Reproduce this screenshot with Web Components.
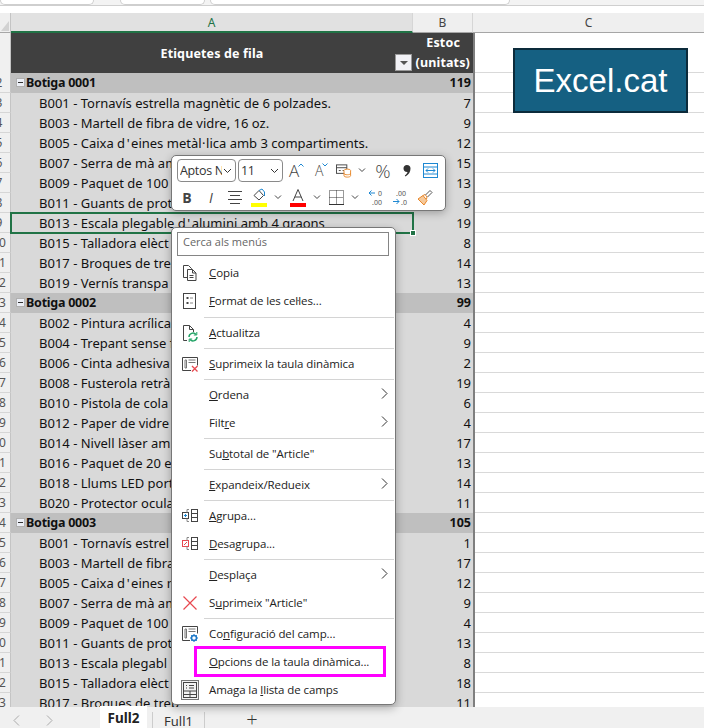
<!DOCTYPE html>
<html lang="ca">
<head>
<meta charset="utf-8">
<title>Excel.cat</title>
<style>
html, body { margin: 0; height: 100%; overflow: hidden; background: #fff; }
</style>
</head>
<body>
<xl-app></xl-app>
<script>
const CELL_FONT = `"Noto Sans", sans-serif`;
const MENU_FONT = `"Open Sans", sans-serif`;

const ROWS = [
	["g", "Botiga 0001", 119],
	["i", "B001 - Tornavís estrella magnètic de 6 polzades.", 7],
	["i", "B003 - Martell de fibra de vidre, 16 oz.", 9],
	["i", "B005 - Caixa d'eines metàl·lica amb 3 compartiments.", 12],
	["i", "B007 - Serra de mà am", 15],
	["i", "B009 - Paquet de 100 c", 13],
	["i", "B011 - Guants de prot", 9],
	["i", "B013 - Escala plegable d'alumini amb 4 graons", 19],
	["i", "B015 - Talladora elèct", 8],
	["i", "B017 - Broques de trep", 14],
	["i", "B019 - Vernís transpa", 13],
	["g", "Botiga 0002", 99],
	["i", "B002 - Pintura acrílica", 4],
	["i", "B004 - Trepant sense f", 9],
	["i", "B006 - Cinta adhesiva", 2],
	["i", "B008 - Fusterola retrà", 19],
	["i", "B010 - Pistola de cola", 6],
	["i", "B012 - Paper de vidre", 4],
	["i", "B014 - Nivell làser am", 17],
	["i", "B016 - Paquet de 20 e", 13],
	["i", "B018 - Llums LED port", 14],
	["i", "B020 - Protector ocula", 11],
	["g", "Botiga 0003", 105],
	["i", "B001 - Tornavís estrel", 1],
	["i", "B003 - Martell de fibra", 17],
	["i", "B005 - Caixa d'eines m", 12],
	["i", "B007 - Serra de mà am", 9],
	["i", "B009 - Paquet de 100 c", 4],
	["i", "B011 - Guants de prot", 13],
	["i", "B013 - Escala plegabl", 8],
	["i", "B015 - Talladora elèct", 18],
	["i", "B017 - Broques de trep", 11],
];

const ICONS = {
	copy: `<svg width="18" height="18" viewBox="0 0 18 18" fill="none" stroke="#444"><path d="M6.500 13.500h-4v-12h5l3 3v1"/><path d="M6.500 5.500h5l3.500 3.500v7.500h-8.500z" fill="#fff"/><path d="M11.500 5.500v3.500h3.500M8.500 11.500h4M8.500 13.500h4"/></svg>`,
	format: `<svg width="18" height="18" viewBox="0 0 18 18" fill="none" stroke="#444"><rect x="2.500" y="1.500" width="12" height="15"/><rect x="5.500" y="5" width="2" height="2" fill="#444" stroke="none"/><rect x="5.500" y="10" width="2" height="2" fill="#444" stroke="none"/><path d="M9 6h3M9 11h3" stroke="#888"/></svg>`,
	refresh: `<svg width="18" height="18" viewBox="0 0 18 18" fill="none"><path d="M6 16.500h-3.500v-15h6l4 4v2.500M8.500 1.500v4h4" stroke="#444"/><path d="M8 13a4 4 0 0 1 7-2.500M16 13a4 4 0 0 1-7 2.500" stroke="#21a366" stroke-width="1.500"/><path d="M15.800 8v3h-3M8.200 18v-3h3" stroke="#21a366"/></svg>`,
	pivotx: `<svg width="18" height="18" viewBox="0 0 18 18" fill="none"><path d="M10 15.500h-8.500v-13h15v8" stroke="#444"/><path d="M4 5h1.500v8h-1.500zM7.500 5h7M7.500 7.500h7" stroke="#777"/><path d="M11 11l5.500 5.500M16.500 11l-5.500 5.500" stroke="#e8484f" stroke-width="1.300"/></svg>`,
	group: `<svg width="18" height="18" viewBox="0 0 18 18" fill="none" stroke="#444"><rect x="1.500" y="5.500" width="6" height="6"/><path d="M4.500 7v3M3 8.500h3" stroke="#1e88d2"/><path d="M8 2.500h-2v3M8 14.500h-2v-3" stroke="#888"/><rect x="10.500" y="2.500" width="6" height="12"/><path d="M10.500 6.500h6M10.500 10.500h6"/></svg>`,
	ungroup: `<svg width="18" height="18" viewBox="0 0 18 18" fill="none" stroke="#444"><rect x="1.500" y="5.500" width="6" height="6" stroke="#e8484f"/><path d="M3 10l3-3" stroke="#e8484f"/><path d="M8 2.500h-2v3M8 14.500h-2v-3" stroke="#888"/><rect x="10.500" y="2.500" width="6" height="12"/><path d="M10.500 6.500h6M10.500 10.500h6"/></svg>`,
	cross: `<svg width="18" height="18" viewBox="0 0 18 18" fill="none" stroke="#e8484f" stroke-width="1.200"><path d="M2.500 2.500l13 13M15.500 2.500l-13 13"/></svg>`,
	pivotgear: `<svg width="18" height="18" viewBox="0 0 18 18" fill="none"><path d="M9 15.500h-7.500v-14h15v7" stroke="#444"/><path d="M4 4h1.500v9h-1.500zM7.500 4h7M7.500 6.500h7" stroke="#777"/><circle cx="13" cy="13" r="2.500" stroke="#1e78c8" stroke-width="1.500"/><path d="M13 9v1.500M13 15.500v1.500M9 13h1.500M15.500 13h1.500M10.200 10.200l1 1M14.800 14.800l1 1M15.800 10.200l-1 1M11.200 14.800l-1 1" stroke="#1e78c8"/></svg>`,
	fieldlist: `<svg width="14" height="16" viewBox="0 0 14 16" fill="none" stroke="#444"><rect x="0.500" y="0.500" width="13" height="15"/><path d="M3 3.500h1M6 3.500h5M3 6h1M6 6h5M.5 9h13M.5 12.500h13M7 9v6.500"/></svg>`,
};

function define(name, html, render) {
	customElements.define(name, class extends HTMLElement {
		constructor() {
			super();
			this.attachShadow({mode: "open"}).innerHTML = html;
		}
		connectedCallback() {
			render && render(this, this.shadowRoot);
		}
	});
}

define("xl-topbar", `
<style>
:host { display: flex; height: 13px; flex: none; background: #fff; box-sizing: border-box; position: relative; }
.strip { display: flex; gap: 5px; height: 5px; width: 100%; background: #f3f3f3; border-bottom: 1px solid #cfcfcf; box-sizing: content-box; }
i { display: block; height: 5px; background: #fff; border: 1px solid #cfcfcf; border-top: 0; border-radius: 0 0 5px 5px; box-sizing: border-box; }
</style>
<div class="strip">
	<i style="width:94px"></i>
	<i style="width:85px;margin-left:21px"></i>
	<i style="width:300px"></i>
</div>`);

define("xl-columns", `
<style>
:host { display: grid; grid-template-columns: 11px 402px 60px 1fr; height: 20px; flex: none; font: 12px ${CELL_FONT}; color: #444; background: #efefef; }
div { display: flex; align-items: center; justify-content: center; box-sizing: border-box; border-bottom: 1px solid #a6a6a6; border-right: 1px solid #d6d6d6; }
.corner { border-right: 1px solid #c4c4c4; position: relative; }
.corner::after { content: ""; position: absolute; right: 1px; bottom: 1px; border-style: solid; border-color: transparent #d2d2d2 #d2d2d2 transparent; border-width: 5px 4px; }
.a { background: #e1e1e1; color: #217346; border-bottom: 2px solid #217346; }
.c { border-right: 0; }
</style>
<div class="corner"></div><div class="a">A</div><div>B</div><div class="c">C</div>`);

define("xl-head", `
<style>
:host { display: grid; grid-template-columns: 11px 402px 60px 2px 1fr; height: 40px; font: 700 12.500px ${CELL_FONT}; color: #fff; letter-spacing: .15px; }
.n { background: #f0f0f0; border-right: 1px solid #c4c4c4; box-sizing: border-box; }
.a { background: #404040; display: flex; align-items: center; justify-content: center; }
.b { background: #404040; text-align: right; padding-right: 3px; line-height: 20px; box-sizing: border-box; position: relative; white-space: nowrap; }
.e { padding-right: 10px; }
.f { position: absolute; left: -18px; top: 21px; width: 17px; height: 17px; background: #f1f1f6; border: 1px solid #999; box-sizing: border-box; display: flex; align-items: center; justify-content: center; }
.f::after { content: ""; border: 4px solid transparent; border-top: 4px solid #555; border-bottom: 0; }
.g { background: #7f7f7f; }
.c { border-bottom: 1px solid #d9d9d9; }
</style>
<div class="n"></div>
<div class="a">Etiquetes de fila</div>
<div class="b"><div class="e">Estoc</div><div>(unitats)</div><span class="f"></span></div>
<div class="g"></div>
<div class="c"></div>`);

define("xl-row", `
<style>
:host { display: grid; grid-template-columns: 11px 402px 60px 2px 1fr; height: 20px; font: 13px/20px ${CELL_FONT}; color: #111; white-space: nowrap; }
.n { background: #f0f0f0; border-right: 1px solid #c4c4c4; border-bottom: 1px solid #d6d6d6; box-sizing: border-box; overflow: hidden; color: #555; font-size: 12px; }
.n span { display: block; width: 16px; margin-left: -9px; text-align: center; }
.a, .b { background: #d9d9d9; }
.a { padding-left: 28px; overflow: hidden; box-sizing: border-box; }
.b { text-align: right; padding-right: 2px; box-sizing: border-box; }
.g { background: #7f7f7f; }
.c { border-bottom: 1px solid #d9d9d9; box-sizing: border-box; }
.w { padding: 0 1.500px; }
.d { padding: 0 .5px; }
.m { display: none; width: 9px; height: 9px; box-sizing: border-box; margin: 0 1px 0 -23px; background: #eceff6; border: 1px solid #b0b0b0; position: relative; }
.m::after { content: ""; position: absolute; left: 1px; right: 1px; top: 3px; height: 1px; background: #333; }
:host([group]) .a, :host([group]) .b { background: #bfbfbf; font-weight: 700; font-size: 12.500px; }
:host([group]) .m { display: inline-block; }
:host([group]) .a { letter-spacing: -.25px; }
</style>
<div class="n"><span></span></div>
<div class="a"><i class="m"></i><span class="t"></span></div>
<div class="b"></div>
<div class="g"></div>
<div class="c"></div>`, (el, root) => {
	root.querySelector(".n span").textContent = el.getAttribute("num");
	root.querySelector(".t").innerHTML = el.getAttribute("label")
		.replace(/'/g, `<span class="w">'</span>`)
		.replace(/·/g, `<span class="d">·</span>`);
	root.querySelector(".b").textContent = el.getAttribute("value");
});

define("xl-logo", `
<style>
:host { position: absolute; left: 513px; top: 48px; width: 175px; height: 65px; box-sizing: border-box; background: #156082; border: 2px solid #0c2b3b; color: #fff; font: 33px "Liberation Sans", sans-serif; display: flex; align-items: center; justify-content: center; }
</style>
<slot></slot>`);

define("xl-selection", `
<style>
:host { position: absolute; left: 10px; top: 212px; width: 404px; height: 22px; box-sizing: border-box; border: 2px solid #217346; }
i { position: absolute; right: -4px; bottom: -4px; width: 6px; height: 6px; background: #217346; border: 1px solid #fff; box-sizing: border-box; }
</style>
<i></i>`);

define("xl-combo", `
<style>
:host { display: flex; align-items: center; box-sizing: border-box; height: 23px; border: 1px solid #8a8a8a; border-radius: 4px; font: 12.500px ${MENU_FONT}; letter-spacing: -.35px; color: #333; padding: 0 3px 0 2px; overflow: hidden; }
span { flex: 1; overflow: hidden; white-space: nowrap; }
svg { flex: none; margin-left: 1px; }
</style>
<span><slot></slot></span>
<svg width="9" height="6" viewBox="0 0 9 6" fill="none" stroke="#333"><path d="M1 1l3.500 3.500L8 1"/></svg>`);

define("xl-tool", `
<style>
:host { display: flex; align-items: center; justify-content: center; flex: none; height: 23px; color: #444; font: 15px ${MENU_FONT}; }
</style>
<slot></slot>`);

function caret(left) {
	return `<xl-tool style="width:9px;margin-left:${left}px"><svg width="8" height="5" viewBox="0 0 8 5" fill="none" stroke="#444"><path d="M1 .5l3 3 3-3"/></svg></xl-tool>`;
}

define("xl-toolbar", `
<style>
:host { position: absolute; left: 171px; top: 155px; width: 275px; height: 56px; box-sizing: border-box; background: #fff; border: 1px solid #777; border-radius: 5px; box-shadow: 0 2px 8px rgba(0,0,0,.28); padding: 3px 5px; display: flex; flex-direction: column; gap: 4px; }
.row { display: flex; align-items: center; height: 23px; }
</style>
<div class="row">
	<xl-combo style="width:59px">Aptos Na</xl-combo>
	<xl-combo style="width:45px;margin-left:2px">11</xl-combo>
	<xl-tool style="width:15px;margin-left:6px;justify-content:flex-start;font-size:17px;font-weight:300;position:relative">A<svg style="position:absolute;right:0;top:4px" width="6" height="4" viewBox="0 0 6 4" fill="none" stroke="#1e88d2"><path d="M.5 3.500L3 1l2.500 2.500"/></svg></xl-tool>
	<xl-tool style="width:13px;margin-left:11px;justify-content:flex-start;font-size:14px;font-weight:300;position:relative">A<svg style="position:absolute;right:0;top:4px" width="6" height="4" viewBox="0 0 6 4" fill="none" stroke="#1e88d2"><path d="M.5.500L3 3 5.500.500"/></svg></xl-tool>
	<xl-tool style="width:16px;margin-left:8px"><svg width="17" height="14" viewBox="0 0 17 14" fill="none"><rect x=".5" y=".5" width="11" height="9" stroke="#444"/><path d="M.5 3.500h11M3 6.500h2M7 6.500h2" stroke="#444"/><ellipse cx="12" cy="6.500" rx="3.500" ry="1.500" fill="#fff" stroke="#e8872b"/><path d="M8.500 6.500v5.500c0 2 7 2 7 0v-5.500M8.500 9.500c0 2 7 2 7 0" fill="#fff" stroke="#e8872b"/></svg></xl-tool>
	${caret(5)}
	<xl-tool style="width:14px;margin-left:10px;font-size:19px;font-weight:300">%</xl-tool>
	<xl-tool style="width:8px;margin-left:13px"><svg width="8" height="14" viewBox="0 0 8 14"><path d="M3.800 1c2.500 0 3.700 1.500 3.700 3.500 0 3-1.500 6-5 8l-.7-.9c1.500-1.200 2.500-2.500 2.700-3.700C1.800 8 .5 6.500.5 4.500.5 2.500 2 1 3.800 1z" fill="#333"/></svg></xl-tool>
	<xl-tool style="width:15px;margin-left:12px"><svg width="15" height="15" viewBox="0 0 15 15" fill="none" stroke="#1e88d2"><rect x=".5" y=".5" width="14" height="14"/><path d="M.5 4h14M.5 11h14M3 7.500h9M3 7.500l2-2M3 7.500l2 2M12 7.500l-2-2M12 7.500l-2 2"/></svg></xl-tool>
</div>
<div class="row">
	<xl-tool style="width:12px;margin-left:4px;font-weight:700;font-size:14px">B</xl-tool>
	<xl-tool style="width:12px;margin-left:12px;font-style:italic;font-size:14px">I</xl-tool>
	<xl-tool style="width:14px;margin-left:11px"><svg width="14" height="13" viewBox="0 0 14 13" stroke="#444"><path d="M0 .5h14M2 4.500h10M0 8.500h14M2 12.500h10"/></svg></xl-tool>
	<xl-tool style="width:16px;margin-left:9px"><svg width="16" height="19" viewBox="0 0 16 19" fill="none"><path d="M3 7.500L8 2.500l4.500 5-4.500 4.500z" stroke="#444"/><path d="M8 2.500l3-1.500 2.500 3v4" stroke="#1e88d2"/><rect y="15" width="16" height="4" fill="#ffff00"/></svg></xl-tool>
	${caret(6)}
	<xl-tool style="width:16px;margin-left:8px"><svg width="16" height="19" viewBox="0 0 16 19" fill="none"><path d="M3 13L8 1.500 13 13M4.800 9h6.400" stroke="#444"/><rect y="15" width="16" height="4" fill="#f00"/></svg></xl-tool>
	${caret(6)}
	<xl-tool style="width:15px;margin-left:8px"><svg width="15" height="15" viewBox="0 0 15 15" fill="none" stroke="#333" stroke-dasharray="1 1"><path d="M.5.500h14v14h-14zM7.500.500v14M.5 7.500h14"/><path d="M0 14.500h15" stroke-dasharray="none"/></svg></xl-tool>
	${caret(6)}
	<xl-tool style="width:16px;margin-left:9px"><svg width="16" height="17" viewBox="0 0 16 17" fill="none" stroke="#1e88d2"><path d="M1 4h6M1 4l2.500-2.500M1 4l2.500 2.500"/><text x="10" y="7" fill="#555" stroke="none" font-size="7" font-family="Noto Sans">0</text><text x="4" y="16" fill="#555" stroke="none" font-size="7" font-family="Noto Sans">.00</text></svg></xl-tool>
	<xl-tool style="width:15px;margin-left:9px"><svg width="15" height="17" viewBox="0 0 15 17" fill="none" stroke="#1e88d2"><path d="M0 12.500h6M6 12.500l-2.500-2.500M6 12.500l-2.500 2.500"/><text x="3" y="7" fill="#555" stroke="none" font-size="7" font-family="Noto Sans">.00</text><text x="8" y="16" fill="#555" stroke="none" font-size="7" font-family="Noto Sans">.0</text></svg></xl-tool>
	<xl-tool style="width:16px;margin-left:9px"><svg width="16" height="16" viewBox="0 0 16 16" fill="none" stroke="#e8872b"><path d="M1 9l5-3.500 4 5L7 15z" fill="#f6c99a"/><path d="M6 5.500l2-1 2 2.500-.5 2"/><path d="M8.500 5L13 .5l2 2-4.500 4.500" stroke="#555"/></svg></xl-tool>
</div>`);

define("xl-menu-item", `
<style>
:host { display: flex; align-items: center; height: 28px; box-sizing: border-box; padding: 0 0 2px 37px; position: relative; font: 11.500px ${MENU_FONT}; letter-spacing: -.1px; color: #222; white-space: nowrap; }
.ic { position: absolute; left: 0; top: 0; width: 36px; height: 28px; display: flex; align-items: center; justify-content: center; }
.ar { display: none; position: absolute; right: 7px; top: 7px; }
:host([arrow]) .ar { display: block; }
.hl { display: none; position: absolute; left: 22px; top: -2px; width: 192px; height: 31px; box-sizing: border-box; border: 3px solid #ff00ff; }
:host([marked]) .hl { display: block; }
.box { display: flex; align-items: center; justify-content: center; width: 18px; height: 20px; box-sizing: border-box; border: 1px solid #777; background: #f2f2f2; }
</style>
<span class="ic"></span>
<span><slot></slot></span>
<svg class="ar" width="7" height="11" viewBox="0 0 7 11" fill="none" stroke="#333"><path d="M1 .5l5 5-5 5"/></svg>
<span class="hl"></span>`, (el, root) => {
	let icon = ICONS[el.getAttribute("icon")];
	if (!icon) return;
	root.querySelector(".ic").innerHTML = el.hasAttribute("boxed") ? `<span class="box">${icon}</span>` : icon;
});

define("xl-menu-sep", `
<style>
:host { display: flex; align-items: center; height: 3px; padding: 0 1px 0 32px; }
:host([tall]) { height: 4px; }
i { display: block; width: 100%; height: 1px; background: #d4d4d4; }
</style>
<i></i>`);

define("xl-menu", `
<style>
:host { position: absolute; left: 171px; top: 227px; width: 225px; height: 478px; box-sizing: border-box; background: #fff; border: 1px solid #777; border-radius: 5px; box-shadow: 0 3px 10px rgba(0,0,0,.3); display: block; }
.search { margin: 4px 6px 3px 5px; height: 24px; box-sizing: border-box; border: 1px solid #858585; font: 11px/18px ${MENU_FONT}; color: #666; padding-left: 5px; }
</style>
<div class="search">Cerca als menús</div>
<slot></slot>`);

define("xl-tabs", `
<style>
:host { display: block; height: 21px; flex: none; background: #f0f0f0; font: 13px ${CELL_FONT}; color: #333; position: relative; }
svg { position: absolute; top: 8px; }
.tab { position: absolute; display: flex; align-items: center; justify-content: center; box-sizing: border-box; }
.on { left: 100px; top: -1px; width: 47px; height: 22px; padding-top: 2px; background: #fff; font-weight: 700; font-size: 13.500px; color: #222; }
.off { left: 152px; top: 5px; width: 53px; height: 16px; padding-top: 2px; border-left: 1px solid #ccc; border-right: 1px solid #ccc; }
.plus { left: 243px; top: 3px; width: 18px; height: 18px; font: 300 20px ${MENU_FONT}; }
</style>
<svg style="left:13px" width="7" height="11" viewBox="0 0 7 11" fill="none" stroke="#aaa"><path d="M6 .5l-5 5 5 5"/></svg>
<svg style="left:46px" width="7" height="11" viewBox="0 0 7 11" fill="none" stroke="#aaa"><path d="M1 .5l5 5-5 5"/></svg>
<span class="tab on">Full2</span>
<span class="tab off">Full1</span>
<span class="tab plus">+</span>`);

define("xl-app", `
<style>
:host { display: flex; flex-direction: column; width: 704px; height: 728px; position: relative; overflow: hidden; background: #fff; }
.grid { flex: 1; overflow: hidden; min-height: 0; }
</style>
<xl-topbar></xl-topbar>
<xl-columns></xl-columns>
<div class="grid"><xl-head></xl-head></div>
<xl-tabs></xl-tabs>
<xl-logo>Excel.cat</xl-logo>
<xl-selection></xl-selection>
<xl-toolbar></xl-toolbar>
<xl-menu>
	<xl-menu-item icon="copy"><u>C</u>opia</xl-menu-item>
	<xl-menu-item icon="format"><u>F</u>ormat de les cel·les...</xl-menu-item>
	<xl-menu-sep tall></xl-menu-sep>
	<xl-menu-item icon="refresh"><u>A</u>ctualitza</xl-menu-item>
	<xl-menu-sep></xl-menu-sep>
	<xl-menu-item icon="pivotx"><u>S</u>uprimeix la taula dinàmica</xl-menu-item>
	<xl-menu-sep></xl-menu-sep>
	<xl-menu-item arrow><u>O</u>rdena</xl-menu-item>
	<xl-menu-item arrow>Filt<u>r</u>e</xl-menu-item>
	<xl-menu-sep></xl-menu-sep>
	<xl-menu-item>Su<u>b</u>total de "Article"</xl-menu-item>
	<xl-menu-sep></xl-menu-sep>
	<xl-menu-item arrow><u>E</u>xpandeix/Redueix</xl-menu-item>
	<xl-menu-sep></xl-menu-sep>
	<xl-menu-item icon="group"><u>A</u>grupa...</xl-menu-item>
	<xl-menu-item icon="ungroup"><u>D</u>esagrupa...</xl-menu-item>
	<xl-menu-sep></xl-menu-sep>
	<xl-menu-item arrow><u>D</u>esplaça</xl-menu-item>
	<xl-menu-item icon="cross">S<u>u</u>primeix "Article"</xl-menu-item>
	<xl-menu-sep></xl-menu-sep>
	<xl-menu-item icon="pivotgear">Co<u>n</u>figuració del camp...</xl-menu-item>
	<xl-menu-item marked><u>O</u>pcions de la taula dinàmica...</xl-menu-item>
	<xl-menu-item icon="fieldlist" boxed>Amaga la <u>l</u>lista de camps</xl-menu-item>
</xl-menu>`, (el, root) => {
	let grid = root.querySelector(".grid");
	ROWS.forEach(([kind, label, value], i) => {
		let row = document.createElement("xl-row");
		row.setAttribute("num", i + 2);
		row.setAttribute("label", label);
		row.setAttribute("value", value);
		if (kind == "g") row.setAttribute("group", "");
		grid.append(row);
	});
});
</script>
</body>
</html>
